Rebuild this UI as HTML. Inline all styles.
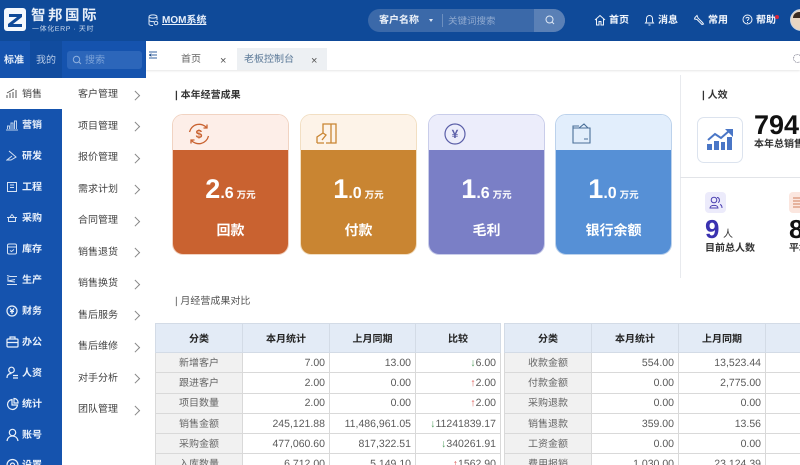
<!DOCTYPE html>
<html lang="zh"><head><meta charset="utf-8"><title>MOM</title>
<style>
*{box-sizing:border-box;margin:0;padding:0}
html,body{width:800px;height:465px;overflow:hidden;background:#fff}
body{position:relative;font-family:"Liberation Sans","Noto Sans CJK SC",sans-serif;font-size:10px;color:#333;text-rendering:geometricPrecision}
.a{position:absolute;white-space:nowrap}
.side{left:0;width:62px;height:31px;color:#e8f0fb;font-size:10px;font-weight:700;line-height:33px;padding-left:22px}
.side svg{position:absolute;left:6px;top:9px}
.sub{left:78px;color:#444;font-size:10px;line-height:14px}
.chev{left:132px;width:6.500px;height:6.500px;border-top:1px solid #888;border-right:1px solid #888;transform:rotate(45deg)}
.card{top:114px;width:117px;height:141px;border-radius:11px;overflow:hidden;border:1px solid}
.card .t{height:35px}
.card .b{height:106px;position:relative;color:#fff;text-align:center}
.num{position:absolute;left:0;right:0;top:22px;line-height:34px;font-weight:700;font-size:16px}
.num b{font-size:27px}.num i{font-style:normal;font-size:9.500px;margin-left:3px}
.lb{position:absolute;left:0;right:0;top:70px;font-size:14px;font-weight:700;line-height:20px}
.card svg{position:absolute;left:14px;top:7px}
table{position:absolute;top:323px;border-collapse:collapse;table-layout:fixed;font-size:10.500px;color:#5a5a5a}
th{background:#e3ebf6;color:#222;height:29px;border:1px solid #d3dbe6;font-size:10px;font-weight:700;text-align:center;padding-bottom:2px}
td{height:20.300px;border:1px solid #d9d9d9;text-align:right;padding:0 4px 0 0;line-height:16px;background:#fff;white-space:nowrap;overflow:hidden}
td:first-child{background:#f1f1f1;text-align:center;padding:2px 0 0;font-size:10px;color:#666;line-height:14px}
.u{color:#d9534f}.d{color:#4a9a57}
.nav{top:14px;color:#f0f5fc;font-size:10px;font-weight:700;line-height:14px}
</style></head><body>
<div class="a" style="left:0;top:0;width:800px;height:41px;background:#0f4a99"></div>
<div class="a" style="left:4px;top:8px;width:22px;height:23px;background:#f4f8fd;border-radius:3px"></div>
<svg class="a" style="left:4px;top:8px" width="22" height="23"><path d="M5 6H18V9L9 16H18V19H4V16L13 9H5Z" fill="#0f4a99"/></svg>
<div class="a" style="left:31px;top:7px;color:#e6eef8;font-size:14.500px;font-weight:700;letter-spacing:2.500px;line-height:18px">智邦国际</div>
<div class="a" style="left:32px;top:25px;color:#c9d8ec;font-size:7px;letter-spacing:.6px;line-height:10px">一体化ERP · 天时</div>
<svg class="a" style="left:148px;top:14px" width="11" height="12" fill="none" stroke="#dbe6f5"><ellipse cx="5" cy="2.500" rx="4" ry="1.600"/><path d="M1 3V10c0 1 2 1.500 4 1.500M9 3V6M1 6.500c1 1 3 1.200 5 1"/><circle cx="8" cy="9" r="1.800"/></svg>
<div class="a" style="left:162px;top:14px;color:#e8f0fb;font-size:10px;font-weight:700;line-height:14px;text-decoration:underline">MOM系统</div>

<div class="a" style="left:368px;top:9px;width:197px;height:23px;border-radius:12px;background:#3b69a9;overflow:hidden">
<div class="a" style="right:0;top:0;width:31px;height:23px;background:#5a80b6"></div></div>
<div class="a" style="left:379px;top:14px;color:#eef3fa;font-size:10px;font-weight:700;line-height:14px">客户名称</div>
<div class="a" style="left:429px;top:19px;border:2.500px solid transparent;border-top:3px solid #dfe8f5"></div>
<div class="a" style="left:442px;top:14px;width:1px;height:13px;background:#6c8fbf"></div>
<div class="a" style="left:448px;top:15px;color:#8fa9cf;font-size:9.500px;line-height:13px">关键词搜索</div>
<svg class="a" style="left:544px;top:14px" width="12" height="12" fill="none" stroke="#dfe8f5"><circle cx="5.500" cy="5.500" r="3.500"/><path d="M8 8l2 2"/></svg>
<svg class="a" style="left:594px;top:14px" width="12" height="12" fill="none" stroke="#eef3fa"><path d="M1 6L6 1.500 11 6M2.500 5V11H5V7.500H7V11H9.500V5"/></svg>
<div class="a nav" style="left:609px">首页</div>
<svg class="a" style="left:644px;top:14px" width="11" height="12" fill="none" stroke="#eef3fa"><path d="M1.500 9H9.500L8.500 7.500V4.500A3 3 0 0 0 2.500 4.500V7.500ZM4.500 11H6.500"/></svg>
<div class="a nav" style="left:658px">消息</div>
<svg class="a" style="left:693px;top:14px" width="12" height="12" fill="none" stroke="#eef3fa"><path d="M2 3.500L4 1.500 5 4 9.500 8.500 10.500 10 9 10.500 4 5.500 1.500 5Z"/></svg>
<div class="a nav" style="left:708px">常用</div>
<svg class="a" style="left:742px;top:14px" width="11" height="11" fill="none" stroke="#eef3fa"><circle cx="5.500" cy="5.500" r="4.500"/><path d="M4 4.500C4 3 7 3 7 4.500 7 5.500 5.500 5.500 5.500 7M5.500 8V9"/></svg>
<div class="a nav" style="left:756px">帮助</div>
<div class="a" style="left:775px;top:15px;width:4px;height:4px;border-radius:50%;background:#d6263b"></div>
<div class="a" style="left:790px;top:9px;width:22px;height:22px;border-radius:50%;background:#e9d6c2;border:1px solid #c9d4e2"></div>
<div class="a" style="left:793px;top:12px;width:14px;height:6px;border-radius:7px 7px 0 0;background:#3a2a20"></div>

<div class="a" style="left:0;top:41px;width:146px;height:37px;background:#1553ae"></div>
<div class="a" style="left:30px;top:41px;width:32px;height:37px;background:#114c9f"></div>
<div class="a" style="left:4px;top:54px;color:#e6eef9;font-size:10px;font-weight:700;line-height:14px">标准</div>
<div class="a" style="left:36px;top:54px;color:#b9cce8;font-size:10px;line-height:14px">我的</div>
<div class="a" style="left:67px;top:51px;width:75px;height:18px;border-radius:3px;background:#2c66ba"></div>
<svg class="a" style="left:72px;top:55px" width="10" height="10" fill="none" stroke="#8fb0de"><circle cx="4.500" cy="4.500" r="3.200"/><path d="M7 7l2 2"/></svg>
<div class="a" style="left:85px;top:54px;color:#7da3d8;font-size:10px;line-height:13px">搜索</div>

<div class="a" style="left:146px;top:41px;width:654px;height:29px;background:#fff;box-shadow:0 1px 2px rgba(0,0,0,.1)"></div>
<svg class="a" style="left:149px;top:51px" width="9" height="9" stroke="#33619f"><path d="M0 1H8M3 4H8M0 7H8M0 4L2 3V5Z"/></svg>
<div class="a" style="left:181px;top:53px;color:#666;font-size:10px;line-height:14px">首页</div>
<div class="a" style="left:220px;top:54px;color:#555;font-size:11px;line-height:14px">×</div>
<div class="a" style="left:237px;top:48px;width:90px;height:22px;background:#edf0f3"></div>
<div class="a" style="left:244px;top:53px;color:#5a7897;font-size:10px;line-height:14px">老板控制台</div>
<div class="a" style="left:311px;top:54px;color:#555;font-size:11px;line-height:14px">×</div>
<div class="a" style="left:793px;top:54px;width:9px;height:9px;border-radius:50%;border:1px dotted #778"></div>

<div class="a" style="left:0;top:78px;width:62px;height:387px;background:#1553ae"></div>
<div class="a side" style="top:78px;background:#fff;color:#444;font-weight:400"><svg width="12" height="14" fill="none" stroke="#555"><path d="M1 11V8M4 11V6M7 11V5M10 11V3M1 6L8 2"/></svg>销售</div>
<div class="a side" style="top:109px"><svg width="12" height="14" fill="none" stroke="#bcd0ec"><path d="M1.500 11V8H3.500V11M5 11V5H7V11M8.500 11V3H10.500V11M0 12H12"/></svg>营销</div>
<div class="a side" style="top:140px"><svg width="12" height="14" fill="none" stroke="#d7e3f4"><path d="M3 2L10 8 5 11H1L6 7"/></svg>研发</div>
<div class="a side" style="top:171px"><svg width="12" height="14" fill="none" stroke="#d7e3f4"><path d="M1.500 2.500H10.500V11.500H1.500ZM4 5H8M4 7.500H8"/></svg>工程</div>
<div class="a side" style="top:202px"><svg width="12" height="14" fill="none" stroke="#d7e3f4"><path d="M1 6.500H11M2.500 6.500V10.500H9.500V6.500M4 6L6 3.500 8 6"/></svg>采购</div>
<div class="a side" style="top:233px"><svg width="12" height="14" fill="none" stroke="#d7e3f4"><rect x="1.500" y="2" width="9" height="10" rx="1.500"/><path d="M1.500 5H10.500M4 8.500L5.500 9.500 8 7.500"/></svg>库存</div>
<div class="a side" style="top:264px"><svg width="12" height="14" fill="none" stroke="#d7e3f4"><path d="M1 2.500L4 3.500H11M1 11.500H11M2 4V8L9 6.500M2 8L9 9"/></svg>生产</div>
<div class="a side" style="top:295px"><svg width="13" height="14" fill="none" stroke="#eaf1fa" stroke-width="1.200"><circle cx="6" cy="7" r="5"/><path d="M4 4.500L6 7 8 4.500M4 7.500H8M6 7V10"/></svg>财务</div>
<div class="a side" style="top:326px"><svg width="13" height="14" fill="none" stroke="#eaf1fa" stroke-width="1.200"><rect x="1" y="4" width="11" height="8" rx="1"/><path d="M4 4V2H9V4M1 7.500H12"/></svg>办公</div>
<div class="a side" style="top:357px"><svg width="13" height="14" fill="none" stroke="#eaf1fa" stroke-width="1.200"><circle cx="5.500" cy="4" r="2.800"/><path d="M1 12C1 8.500 3 7.500 5.500 7.500M7 9.500H12M7 12H12"/></svg>人资</div>
<div class="a side" style="top:388px"><svg width="13" height="14" fill="none" stroke="#eaf1fa" stroke-width="1.200"><path d="M6 2.500A5 5 0 1 0 11.500 8H6ZM8 1.500A4 4 0 0 1 12 6H8Z"/></svg>统计</div>
<div class="a side" style="top:419px"><svg width="13" height="14" fill="none" stroke="#eaf1fa" stroke-width="1.200"><circle cx="6.500" cy="4.500" r="3.200"/><path d="M1 13C1.500 9.500 4 8 6.500 8S11.500 9.500 12 13"/></svg>账号</div>
<div class="a side" style="top:449px"><svg width="13" height="14" fill="none" stroke="#eaf1fa" stroke-width="1.200"><circle cx="6.500" cy="7" r="5.500"/><circle cx="6.500" cy="7" r="2"/></svg>设置</div>

<div class="a sub" style="top:88px">客户管理</div><div class="a chev" style="top:92px"></div>
<div class="a sub" style="top:120px">项目管理</div><div class="a chev" style="top:123px"></div>
<div class="a sub" style="top:151px">报价管理</div><div class="a chev" style="top:155px"></div>
<div class="a sub" style="top:183px">需求计划</div><div class="a chev" style="top:186px"></div>
<div class="a sub" style="top:214px">合同管理</div><div class="a chev" style="top:218px"></div>
<div class="a sub" style="top:246px">销售退货</div><div class="a chev" style="top:249px"></div>
<div class="a sub" style="top:277px">销售换货</div><div class="a chev" style="top:281px"></div>
<div class="a sub" style="top:309px">售后服务</div><div class="a chev" style="top:312px"></div>
<div class="a sub" style="top:340px">售后维修</div><div class="a chev" style="top:344px"></div>
<div class="a sub" style="top:372px">对手分析</div><div class="a chev" style="top:375px"></div>
<div class="a sub" style="top:403px">团队管理</div><div class="a chev" style="top:407px"></div>

<div class="a" style="left:175px;top:89px;color:#333;font-size:10px;font-weight:700;line-height:14px">| 本年经营成果</div>

<div class="a card" style="left:172px;border-color:#f1d3c2"><div class="t" style="background:#fdeee8"></div><div class="b" style="background:#c96230"><div class="num"><b>2</b>.6<i>万元</i></div><div class="lb">回款</div></div>
<svg width="24" height="24" fill="none" stroke="#c96230" stroke-width="1.300"><path d="M2.500 10A10 10 0 0 1 20 6M21.500 14A10 10 0 0 1 4 18M20 2.500V6H16.500M4 21.500V18H7.500"/><text x="12" y="16" text-anchor="middle" font-size="12" font-weight="700" fill="#c96230" stroke="none" font-family="Liberation Sans">$</text></svg></div>

<div class="a card" style="left:300px;border-color:#f2dfc3"><div class="t" style="background:#fdf3e8"></div><div class="b" style="background:#c98532"><div class="num"><b>1</b>.0<i>万元</i></div><div class="lb">付款</div></div>
<svg width="24" height="24" fill="none" stroke="#c98532" stroke-width="1.300"><path d="M8 11V2H21V21H11M16 2V21M2 21V15L8 11 11 13 7 18M2 21H9"/></svg></div>

<div class="a card" style="left:428px;border-color:#c9cdea"><div class="t" style="background:#ecedfb"></div><div class="b" style="background:#7a7fc6"><div class="num"><b>1</b>.6<i>万元</i></div><div class="lb">毛利</div></div>
<svg width="24" height="24" fill="none" stroke="#5b5fa8" stroke-width="1.200"><circle cx="12" cy="12" r="10"/><text x="12" y="16" text-anchor="middle" font-size="12" font-weight="700" fill="#5b5fa8" stroke="none" font-family="Liberation Sans">¥</text></svg></div>

<div class="a card" style="left:555px;border-color:#bcd2ec"><div class="t" style="background:#e2eefc"></div><div class="b" style="background:#5690d6"><div class="num"><b>1</b>.0<i>万元</i></div><div class="lb">银行余额</div></div>
<svg width="24" height="24" fill="none" stroke="#4a6f98" stroke-width="1.100"><path d="M3 6H20V21H3ZM3 6V4H9M9 6L14 2 18 6M14 17H18"/></svg></div>

<div class="a" style="left:680px;top:75px;width:1px;height:203px;background:#e8eaee"></div>
<div class="a" style="left:680px;top:177px;width:120px;height:1px;background:#e2e4e8"></div>
<div class="a" style="left:702px;top:89px;color:#333;font-size:10px;font-weight:700;line-height:14px">| 人效</div>
<div class="a" style="left:697px;top:117px;width:46px;height:46px;border:1px solid #dce3ee;border-radius:7px"></div>
<svg class="a" style="left:707px;top:129px" width="27" height="22"><path d="M0 21V15H5V21ZM7 21V12H12V21ZM14 21V13H18V21ZM20 21V8H25V21Z" fill="#4a76c6"/><path d="M1 11L8 5 14 9 22 2" fill="none" stroke="#4a76c6" stroke-width="2"/><path d="M18 0H26V8Z" fill="#4a76c6"/></svg>
<div class="a" style="left:754px;top:109px;color:#111;font-size:27px;font-weight:700;line-height:32px">7947</div>
<div class="a" style="left:754px;top:138px;color:#333;font-size:10px;font-weight:700;line-height:13px">本年总销售额</div>
<div class="a" style="left:705px;top:192px;width:21px;height:21px;border-radius:4px;background:#ecebfb"></div>
<svg class="a" style="left:709px;top:196px" width="14" height="13" fill="none" stroke="#4a3fb0"><circle cx="5" cy="4" r="2.800"/><path d="M1 12C1 8.500 9 8.500 9 12ZM8 1.500C11 1.500 11 6 9 6.500M11 8.500C12.500 9 13 10.500 13 12"/></svg>
<div class="a" style="left:705px;top:214px;color:#3a32b0;font-size:26px;font-weight:700;line-height:30px">9</div>
<div class="a" style="left:723px;top:228px;color:#333;font-size:10px;line-height:14px">人</div>
<div class="a" style="left:705px;top:242px;color:#333;font-size:10px;font-weight:700;line-height:14px">目前总人数</div>
<div class="a" style="left:789px;top:192px;width:21px;height:21px;border-radius:4px;background:#fbe6df"></div>
<svg class="a" style="left:793px;top:197px" width="7" height="11" stroke="#d2805e"><path d="M0 1H7M0 4H7M0 7H7M0 10H7"/></svg>
<div class="a" style="left:789px;top:214px;color:#111;font-size:26px;font-weight:700;line-height:30px">8</div>
<div class="a" style="left:789px;top:242px;color:#333;font-size:10px;font-weight:700;line-height:14px">平均</div>

<div class="a" style="left:175px;top:295px;color:#555;font-size:10px;line-height:14px">| 月经营成果对比</div>

<table style="left:155px;width:345px">
<colgroup><col style="width:87px"><col style="width:87px"><col style="width:86px"><col style="width:85px"></colgroup>
<tr><th>分类</th><th>本月统计</th><th>上月同期</th><th>比较</th></tr>
<tr><td>新增客户</td><td>7.00</td><td>13.00</td><td><span class="d">↓</span>6.00</td></tr>
<tr><td>跟进客户</td><td>2.00</td><td>0.00</td><td><span class="u">↑</span>2.00</td></tr>
<tr><td>项目数量</td><td>2.00</td><td>0.00</td><td><span class="u">↑</span>2.00</td></tr>
<tr><td>销售金额</td><td>245,121.88</td><td>11,486,961.05</td><td><span class="d">↓</span>11241839.17</td></tr>
<tr><td>采购金额</td><td>477,060.60</td><td>817,322.51</td><td><span class="d">↓</span>340261.91</td></tr>
<tr><td>入库数量</td><td>6,712.00</td><td>5,149.10</td><td><span class="u">↑</span>1562.90</td></tr>
</table>
<table style="left:504px;width:349px">
<colgroup><col style="width:87px"><col style="width:87px"><col style="width:87px"><col style="width:88px"></colgroup>
<tr><th>分类</th><th>本月统计</th><th>上月同期</th><th>比较</th></tr>
<tr><td>收款金额</td><td>554.00</td><td>13,523.44</td><td></td></tr>
<tr><td>付款金额</td><td>0.00</td><td>2,775.00</td><td></td></tr>
<tr><td>采购退款</td><td>0.00</td><td>0.00</td><td></td></tr>
<tr><td>销售退款</td><td>359.00</td><td>13.56</td><td></td></tr>
<tr><td>工资金额</td><td>0.00</td><td>0.00</td><td></td></tr>
<tr><td>费用报销</td><td>1,030.00</td><td>23,124.39</td><td></td></tr>
</table>
</body></html>
